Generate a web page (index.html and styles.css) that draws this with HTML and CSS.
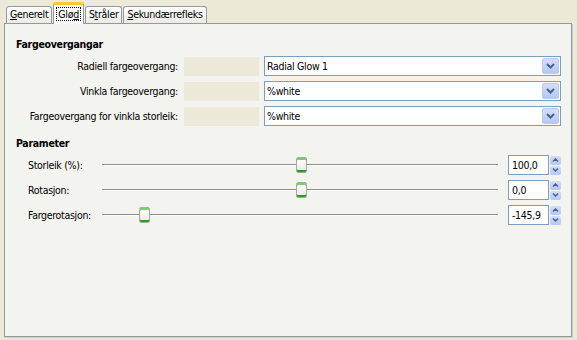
FILE: index.html
```html
<!DOCTYPE html>
<html lang="nn">
<head>
    <meta charset="UTF-8">
    <title>Glød</title>
    <link rel="stylesheet" href="styles.css">
</head>
<body>
    <div class="window">
        <div class="tabs">
            <div class="tab"><u>G</u>enerelt</div>
            <div class="tab active"><span class="focus">Glø<u>d</u></span></div>
            <div class="tab">S<u>t</u>råler</div>
            <div class="tab"><u>S</u>ekundærrefleks</div>
        </div>
        <div class="page">
            <div class="section-title">Fargeovergangar</div>
            <div class="grad-grid">
                <label>Radiell fargeovergang:</label>
                <div class="swatch"></div>
                <div class="combo">
                    <span class="combo-text">Radial Glow 1</span>
                    <span class="drop"><svg width="9" height="6" viewBox="0 0 9 6"><polyline points="1,1 4.5,4.5 8,1" fill="none" stroke="#4d6185" stroke-width="2"/></svg></span>
                </div>

                <label>Vinkla fargeovergang:</label>
                <div class="swatch"></div>
                <div class="combo">
                    <span class="combo-text">%white</span>
                    <span class="drop"><svg width="9" height="6" viewBox="0 0 9 6"><polyline points="1,1 4.5,4.5 8,1" fill="none" stroke="#4d6185" stroke-width="2"/></svg></span>
                </div>

                <label>Fargeovergang for vinkla storleik:</label>
                <div class="swatch"></div>
                <div class="combo">
                    <span class="combo-text">%white</span>
                    <span class="drop"><svg width="9" height="6" viewBox="0 0 9 6"><polyline points="1,1 4.5,4.5 8,1" fill="none" stroke="#4d6185" stroke-width="2"/></svg></span>
                </div>
            </div>

            <div class="section-title">Parameter</div>
            <div class="param-grid">
                <label>Storleik (%):</label>
                <div class="slider"><div class="track"></div><div class="thumb" style="--pos: 0.503"></div></div>
                <div class="spin">
                    <span class="spin-val">100,0</span>
                    <span class="spin-btns">
                        <span class="spin-btn"><svg width="7" height="4" viewBox="0 0 7 4"><polyline points="1,3.5 3.5,1 6,3.5" fill="none" stroke="#4d6185" stroke-width="1.5"/></svg></span>
                        <span class="spin-btn"><svg width="7" height="4" viewBox="0 0 7 4"><polyline points="1,0.5 3.5,3 6,0.5" fill="none" stroke="#4d6185" stroke-width="1.5"/></svg></span>
                    </span>
                </div>

                <label>Rotasjon:</label>
                <div class="slider"><div class="track"></div><div class="thumb" style="--pos: 0.503"></div></div>
                <div class="spin">
                    <span class="spin-val">0,0</span>
                    <span class="spin-btns">
                        <span class="spin-btn"><svg width="7" height="4" viewBox="0 0 7 4"><polyline points="1,3.5 3.5,1 6,3.5" fill="none" stroke="#4d6185" stroke-width="1.5"/></svg></span>
                        <span class="spin-btn"><svg width="7" height="4" viewBox="0 0 7 4"><polyline points="1,0.5 3.5,3 6,0.5" fill="none" stroke="#4d6185" stroke-width="1.5"/></svg></span>
                    </span>
                </div>

                <label>Fargerotasjon:</label>
                <div class="slider"><div class="track"></div><div class="thumb" style="--pos: 0.095"></div></div>
                <div class="spin">
                    <span class="spin-val">-145,9</span>
                    <span class="spin-btns">
                        <span class="spin-btn"><svg width="7" height="4" viewBox="0 0 7 4"><polyline points="1,3.5 3.5,1 6,3.5" fill="none" stroke="#4d6185" stroke-width="1.5"/></svg></span>
                        <span class="spin-btn"><svg width="7" height="4" viewBox="0 0 7 4"><polyline points="1,0.5 3.5,3 6,0.5" fill="none" stroke="#4d6185" stroke-width="1.5"/></svg></span>
                    </span>
                </div>
            </div>
        </div>
    </div>
</body>
</html>
```

FILE: styles.css
```css
body {
    margin: 0;
    background: #ece9d8;
    font-family: "DejaVu Sans Condensed", "DejaVu Sans", sans-serif;
    font-stretch: condensed;
    font-size: 10.5px;
    letter-spacing: -0.3px;
    color: #000;
}
.window {
    width: 577px;
    height: 340px;
    display: flex;
    flex-direction: column;
    padding: 2px 5px 3px 4px;
    box-sizing: border-box;
}
.tabs {
    display: flex;
    align-items: flex-end;
    height: 21px;
    padding-left: 2px;
    position: relative;
    z-index: 1;
}
.tab {
    height: 16px;
    line-height: 15px;
    padding: 0 3px;
    margin-right: 1px;
    border: 1px solid #919b9c;
    border-bottom: none;
    border-radius: 3px 3px 0 0;
    background: linear-gradient(#ffffff, #ecebe5);
    white-space: nowrap;
}
.tab.active {
    height: 19px;
    line-height: 18px;
    padding: 0 3px;
    margin-bottom: -1px;
    background: #fcfcfe;
    border-top: 3px solid #ffc83c;
}
.focus {
    outline: 1px dotted #000;
    padding: 0 1px;
}
.page {
    flex: 1;
    background: #f3f3ef;
    border: 1px solid #919b9c;
    box-shadow: 1px 1px 0 #d0cfc8;
    padding: 14px 10px 0 11px;
}
.section-title {
    font-weight: bold;
    line-height: 13px;
    margin-bottom: 5px;
}
.grad-grid {
    display: grid;
    grid-template-columns: 162px 74px 1fr;
    column-gap: 6px;
    row-gap: 5px;
    align-items: center;
    margin-bottom: 11px;
}
.grad-grid label {
    text-align: right;
    white-space: nowrap;
}
.swatch {
    height: 19px;
    background: #ece9d8;
    margin-right: -1px;
}
.combo {
    height: 20px;
    box-sizing: border-box;
    border: 1px solid #7f9db9;
    background: #fff;
    display: flex;
    align-items: center;
    justify-content: space-between;
    padding-left: 2px;
}
.drop {
    width: 17px;
    height: 16px;
    margin-right: 1px;
    box-sizing: border-box;
    border: 1px solid #b9cbf3;
    border-radius: 2px;
    background: linear-gradient(#d2defb, #b4c8f5);
    display: flex;
    align-items: center;
    justify-content: center;
}
.param-grid {
    display: grid;
    grid-template-columns: 74px 1fr 53px;
    row-gap: 5px;
    align-items: center;
    padding-left: 12px;
}
.param-grid label {
    white-space: nowrap;
}
.slider {
    position: relative;
    height: 20px;
    margin-right: 10px;
}
.track {
    position: absolute;
    left: 0;
    right: 0;
    top: 9px;
    border-top: 1px solid #8f8e8a;
    border-bottom: 1px solid #ffffff;
}
.thumb {
    position: absolute;
    top: 2px;
    left: calc((100% - 11px) * var(--pos));
    width: 11px;
    height: 16px;
    box-sizing: border-box;
    border: 1px solid #a8a8a0;
    border-radius: 2px;
    background: linear-gradient(#ffffff, #ebebe3);
    box-shadow: inset 0 2px 0 #6fd36a, inset 0 -2px 0 #21a121;
}
.spin {
    display: flex;
    align-items: center;
    height: 20px;
}
.spin-val {
    width: 41px;
    height: 20px;
    box-sizing: border-box;
    border: 1px solid #7f9db9;
    background: #fff;
    line-height: 18px;
    padding-left: 3px;
}
.spin-btns {
    display: flex;
    flex-direction: column;
    margin-left: 1px;
    gap: 1px;
}
.spin-btn {
    width: 11px;
    height: 9px;
    box-sizing: border-box;
    border-radius: 2px;
    background: linear-gradient(#d2defb, #b4c8f5);
    display: flex;
    align-items: center;
    justify-content: center;
}
```
